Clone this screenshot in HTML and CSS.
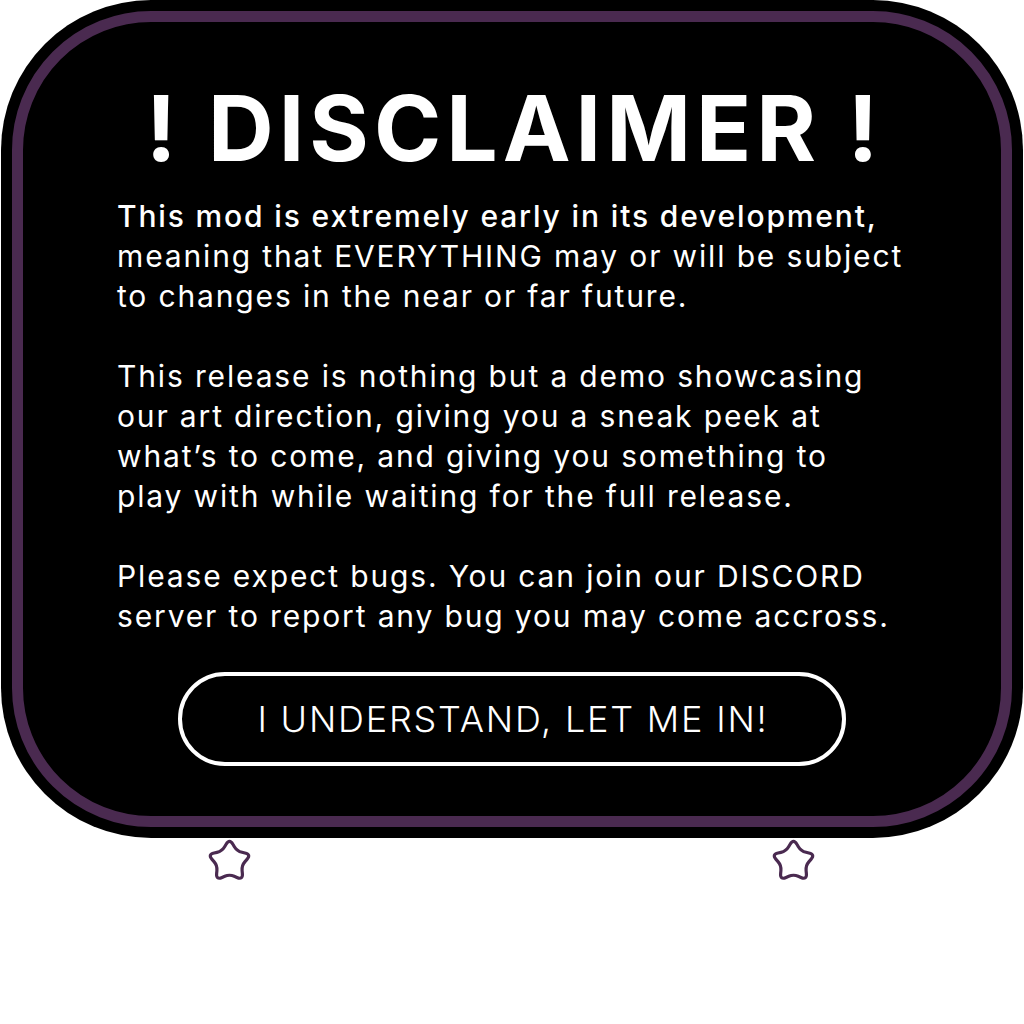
FILE: index.html
```html
<!DOCTYPE html>
<html lang="en">
<head>
<meta charset="utf-8">
<title>Disclaimer</title>
<link rel="stylesheet" href="styles.css">
</head>
<body>
<div class="page">
  <div class="card">
    <div class="inner">
      <h1 class="title">! DISCLAIMER !</h1>
      <div class="body">
        <p class="para"><span class="strong">This mod is extremely early in its development,</span><br>meaning that EVERYTHING may or will be subject<br>to changes in the near or far future.</p>
        <p class="para">This release is nothing but a demo showcasing<br>our art direction, giving you a sneak peek at<br>what’s to come, and giving you something to<br>play with while waiting for the full release.</p>
        <p class="para">Please expect bugs. You can join our DISCORD<br>server to report any bug you may come accross.</p>
      </div>
      <button class="btn">I UNDERSTAND, LET ME IN!</button>
    </div>
  </div>
  <div class="stars">
    <svg class="star" viewBox="0 0 40 40" width="51" height="51"><path d="M 22.65 6.46 L 23.82 8.44 Q 25.88 11.91 29.81 12.80 L 32.06 13.30 Q 37.12 14.44 33.70 18.33 L 32.17 20.06 Q 29.51 23.09 29.88 27.10 L 30.10 29.40 Q 30.58 34.56 25.82 32.51 L 23.70 31.60 Q 20 30 16.30 31.60 L 14.18 32.51 Q 9.42 34.56 9.90 29.40 L 10.12 27.10 Q 10.49 23.09 7.83 20.06 L 6.30 18.33 Q 2.88 14.44 7.94 13.30 L 10.19 12.80 Q 14.12 11.91 16.18 8.44 L 17.35 6.46 Q 20 2 22.65 6.46 Z"/></svg>
    <svg class="star" viewBox="0 0 40 40" width="51" height="51"><path d="M 22.65 6.46 L 23.82 8.44 Q 25.88 11.91 29.81 12.80 L 32.06 13.30 Q 37.12 14.44 33.70 18.33 L 32.17 20.06 Q 29.51 23.09 29.88 27.10 L 30.10 29.40 Q 30.58 34.56 25.82 32.51 L 23.70 31.60 Q 20 30 16.30 31.60 L 14.18 32.51 Q 9.42 34.56 9.90 29.40 L 10.12 27.10 Q 10.49 23.09 7.83 20.06 L 6.30 18.33 Q 2.88 14.44 7.94 13.30 L 10.19 12.80 Q 14.12 11.91 16.18 8.44 L 17.35 6.46 Q 20 2 22.65 6.46 Z"/></svg>
  </div>
</div>
</body>
</html>
```

FILE: styles.css
```css
html, body {
  margin: 0;
  padding: 0;
  background: #ffffff;
}
body {
  font-family: "Inter", "Liberation Sans", sans-serif;
}
.page {
  width: 1024px;
  height: 1024px;
}
.card {
  width: 1022px;
  height: 838px;
  margin-left: 1px;
  box-sizing: border-box;
  padding: 11px;
  background: #000000;
  border-radius: 150px;
}
.inner {
  height: 100%;
  box-sizing: border-box;
  border: 11px solid #4a2a50;
  border-radius: 139px;
  display: flex;
  flex-direction: column;
  align-items: center;
  color: #ffffff;
}
.title {
  margin: 61px 0 0 0;
  padding-left: 5px;
  font-size: 91px;
  font-weight: 700;
  line-height: 1;
  letter-spacing: 5px;
}
.body {
  align-self: flex-start;
  margin: 22px 0 0 94px;
  font-size: 30px;
  line-height: 40px;
  font-weight: 400;
  letter-spacing: 1.85px;
}
.para {
  margin: 0 0 40px 0;
}
.para:last-child {
  margin-bottom: 0;
}
.strong {
  font-weight: 500;
}
.btn {
  margin-top: 36px;
  width: 668px;
  height: 94px;
  box-sizing: border-box;
  border: 4px solid #ffffff;
  border-radius: 47px;
  background: transparent;
  color: #ffffff;
  font-family: "Inter", "Liberation Sans", sans-serif;
  font-size: 36px;
  font-weight: 300;
  letter-spacing: 1.8px;
  padding: 0 0 0 2px;
}
.stars {
  display: flex;
  justify-content: center;
  gap: 513px;
  margin-top: -2px;
  padding-right: 1px;
}
.star {
  display: block;
  fill: none;
  stroke: #4a2a50;
  stroke-width: 2.5;
  stroke-linejoin: round;
}
```
